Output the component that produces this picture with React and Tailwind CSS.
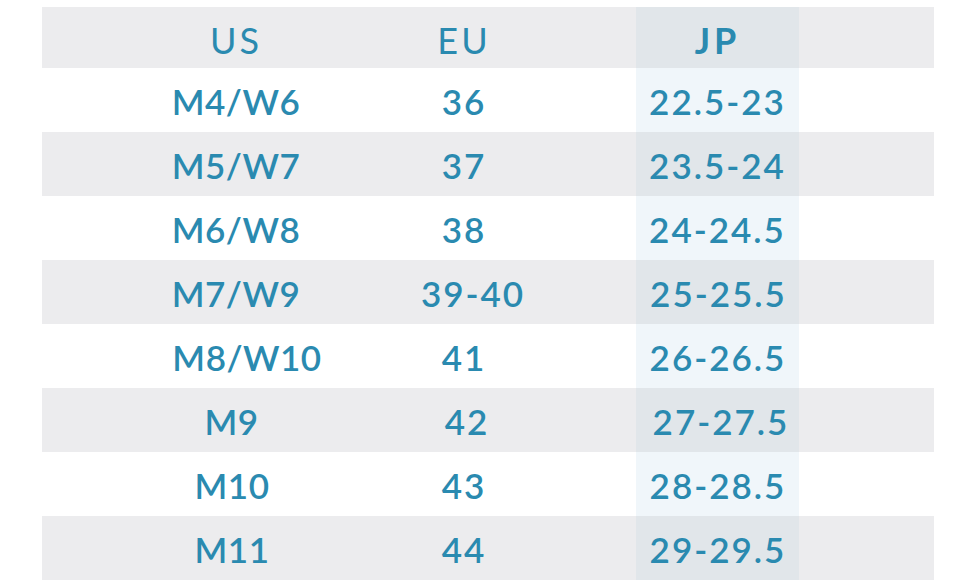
const rows = [
  { us: "M4/W6", eu: "36", jp: "22.5-23", usx: "", eux: "", jpx: "" },
  { us: "M5/W7", eu: "37", jp: "23.5-24", usx: "", eux: "", jpx: "" },
  { us: "M6/W8", eu: "38", jp: "24-24.5", usx: "", eux: "", jpx: "" },
  { us: "M7/W9", eu: "39-40", jp: "25-25.5", usx: "", eux: "pl-[18px]", jpx: "pl-[2px]" },
  { us: "M8/W10", eu: "41", jp: "26-26.5", usx: "pl-[22px]", eux: "", jpx: "pl-[1px]" },
  { us: "M9", eu: "42", jp: "27-27.5", usx: "pr-[9px]", eux: "pl-[6px]", jpx: "pl-[7px]" },
  { us: "M10", eu: "43", jp: "28-28.5", usx: "pr-[8px]", eux: "", jpx: "pl-[1px]" },
  { us: "M11", eu: "44", jp: "29-29.5", usx: "pr-[8px]", eux: "", jpx: "pl-[1px]" },
];

export default function App() {
  return (
    <div
      className="w-[960px] h-[586px] bg-white pt-[7px] pl-[42px] text-[#2a8ab0]"
      style={{ fontFamily: 'Lato, "Noto Sans", sans-serif' }}
    >
      <div className="w-[892px] flex flex-col">
        <div className="flex h-[61px] bg-[#ececee] text-[36px] leading-none">
          <div className="w-[200px] ml-[94px] flex items-center justify-center pt-[4px] font-normal tracking-[3px]">US</div>
          <div className="w-[200px] ml-[28px] flex items-center justify-center pt-[4px] font-normal tracking-[3px]">EU</div>
          <div className="w-[163px] ml-[72px] flex items-center justify-center pt-[4px] font-bold tracking-[4px] bg-[#e1e6ea]">JP</div>
        </div>
        {rows.map((r, i) => {
          const gray = i % 2 === 1;
          return (
            <div
              key={r.us}
              className={`flex h-[64px] text-[35px] leading-none font-semibold ${gray ? "bg-[#ececee]" : "bg-white"}`}
            >
              <div className={`w-[200px] ml-[94px] flex items-center justify-center pt-[3px] whitespace-nowrap tracking-[0.5px] ${r.usx}`}>{r.us}</div>
              <div className={`w-[200px] ml-[28px] flex items-center justify-center pt-[3px] whitespace-nowrap tracking-[2px] ${r.eux}`}>{r.eu}</div>
              <div
                className={`w-[163px] ml-[72px] flex items-center justify-center pt-[3px] whitespace-nowrap tracking-[2px] ${gray ? "bg-[#e1e6ea]" : "bg-[#f0f6fa]"} ${r.jpx}`}
              >
                {r.jp}
              </div>
            </div>
          );
        })}
      </div>
    </div>
  );
}
